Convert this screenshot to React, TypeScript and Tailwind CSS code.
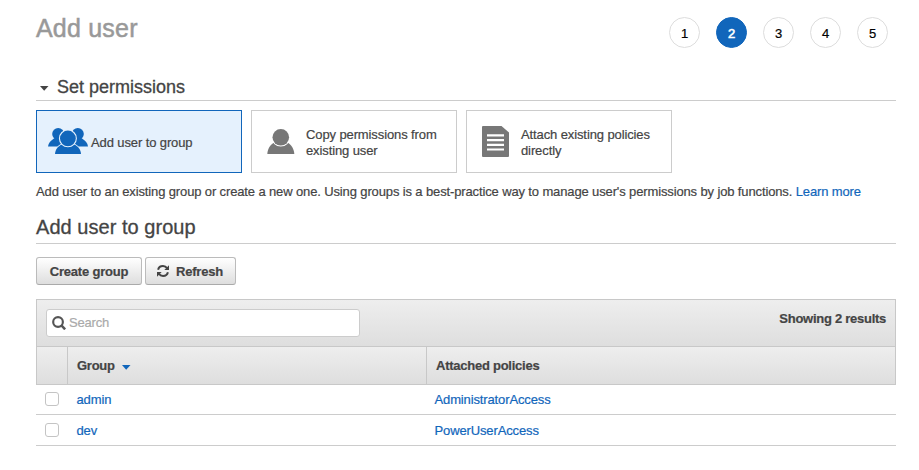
import type { ReactNode } from "react";

const UsersIcon = () => (
  <svg width="40" height="26" viewBox="0 0 40 26" fill="#1166bb" className="mb-0.5 shrink-0">
    <ellipse cx="10.200" cy="6" rx="6" ry="6" />
    <path d="M0 18.500C.5 15 2.500 12.800 6 10.500h8l3 8Z" />
    <ellipse cx="29.800" cy="6" rx="6" ry="6" />
    <path d="M40 18.500c-.5-3.500-2.500-5.700-6-8h-8l-3 8Z" />
    <path d="M7 26c.4-5 3-7.500 6.500-9.500h13c3.500 2 6.100 4.500 6.500 9.500Z" stroke="#e5f1fd" strokeWidth="1.600" paintOrder="stroke" />
    <ellipse cx="19.900" cy="10.400" rx="7.900" ry="7.800" stroke="#e5f1fd" strokeWidth="2.200" paintOrder="stroke" />
  </svg>
);

const UserIcon = () => (
  <svg width="28" height="26" viewBox="0 0 28 26" fill="#777" className="mb-0.5 shrink-0">
    <path d="M.3 26c.4-5.300 2.500-8.300 6-11h15c3.500 2.700 5.600 5.700 6 11Z" />
    <ellipse cx="13.800" cy="9.300" rx="8.300" ry="8.300" stroke="#fff" strokeWidth="2" paintOrder="stroke" />
  </svg>
);

const DocumentIcon = () => (
  <svg width="27" height="31" viewBox="0 0 27 31" className="shrink-0">
    <path d="M1 0H19.500l7.500 6.500v23.500a1 1 0 0 1-1 1h-25A1 1 0 0 1 0 30V1A1 1 0 0 1 1 0Z" fill="#777" />
    <path d="M5 9.300h17M5 14.100h17M5 18.800h17M5 23.500h17" stroke="#fff" strokeWidth="2.200" />
  </svg>
);

const RefreshIcon = () => (
  <svg width="12" height="12" viewBox="0 0 12 12" fill="none" stroke="#444" strokeWidth="2" className="-mt-0.5 shrink-0">
    <path d="M1.100 4.800C1.600 2.500 3.500 1.100 6 1.100c1.800 0 3.200.8 4.100 2.100M10.900 7.200c-.5 2.300-2.400 3.700-4.900 3.700-1.800 0-3.200-.8-4.100-2.100" />
    <path d="M12 .2v4.800H7.300ZM0 11.800V7h4.700Z" fill="#444" stroke="none" />
  </svg>
);

const SearchIcon = () => (
  <svg width="14" height="14" viewBox="0 0 13 13" fill="none" stroke="#555" className="-mt-px shrink-0">
    <circle cx="5.600" cy="5.600" r="4.500" strokeWidth="2" />
    <path d="m8.700 8.700 3.500 3.700" strokeWidth="2.300" />
  </svg>
);

const steps = [1, 2, 3, 4, 5];
const groups = [
  { name: "admin", policy: "AdministratorAccess", height: "h-[30px]", box: "-mt-0.5", text: "pt-px" },
  { name: "dev", policy: "PowerUserAccess", height: "h-[31px]", box: "mt-0", text: "pt-0.5" },
];

function Card({ active, pad, children }: { active?: boolean; pad: string; children: ReactNode }) {
  return (
    <div className={`flex h-[63px] w-[206px] items-center border tracking-[-0.11px] ${pad} ${active ? "border-[#1166bb] bg-[#e5f1fd]" : "border-[#ccc] bg-white"}`}>
      {children}
    </div>
  );
}

const button =
  "flex h-7 items-center rounded-[3px] border border-[#bbb] border-b-[#aaa] bg-linear-to-b from-white to-[#dedede] pt-0.5 text-[13px] font-bold tracking-[-0.2px]";

export default function App() {
  return (
    <main className="h-[470px] w-[919px] overflow-hidden bg-white pl-9 font-['Liberation_Sans',Arial,sans-serif] text-[13px] leading-4 text-[#444] [-webkit-text-stroke:0.2px]">
      <div className="w-[860px]">
        <header className="flex h-[73px] items-start justify-between pr-2">
          <h1 className="pt-[12px] text-[25px] leading-[32px] tracking-[0.2px] text-[#999] [-webkit-text-stroke:0.5px]">Add user</h1>
          <ol className="flex gap-4 pt-[17px]">
            {steps.map((n) => (
              <li key={n} className={`flex size-[31px] items-center justify-center rounded-full border pt-0.5 ${n === 2 ? "border-[#1166bb] bg-[#1166bb] text-white [-webkit-text-stroke:0.6px]" : "border-[#ddd] text-black"}`}>
                {n}
              </li>
            ))}
          </ol>
        </header>

        <h2 className="flex h-7 items-center border-b border-[#ccc] pl-1 text-lg [-webkit-text-stroke:0.3px]">
          <svg width="9" height="5" viewBox="0 0 9 5" className="mt-[3px] mr-2"><path d="M0 0h8.500L4.200 4.800Z" fill="#444" /></svg>
          Set permissions
        </h2>

        <section className="mt-[9px] flex gap-[9px]">
          <Card active pad="gap-[3px] pl-[11px]">
            <UsersIcon />
            <span className="pt-0.5">Add user to group</span>
          </Card>
          <Card pad="gap-[11px] pl-[15px]">
            <UserIcon />
            <span className="pt-0.5">Copy permissions from<br />existing user</span>
          </Card>
          <Card pad="gap-3 pl-[15px]">
            <DocumentIcon />
            <span className="pt-0.5">Attach existing policies<br />directly</span>
          </Card>
        </section>

        <p className="mt-[11px] whitespace-nowrap tracking-[-0.13px]">
          Add user to an existing group or create a new one. Using groups is a best-practice way to manage user's permissions by job functions. <a className="text-[#1166bb]">Learn more</a>
        </p>

        <h2 className="mt-[11px] flex h-[33px] items-center border-b border-[#ccc] text-xl tracking-[0.04px] [-webkit-text-stroke:0.3px]">Add user to group</h2>

        <div className="mt-[13px] flex gap-[3px]">
          <button className={`${button} w-[106px] justify-center`}>Create group</button>
          <button className={`${button} w-[91px] gap-[7px] pl-[11px]`}><RefreshIcon />Refresh</button>
        </div>

        <section className="mt-[14px]">
          <div className="flex h-12 items-start justify-between border border-[#c8c8c8] bg-linear-to-b from-[#eee] to-[#dedede] pt-[9px] pr-[9px] pl-[9px]">
            <div className="flex h-7 w-[314px] items-center gap-[3px] rounded-[3px] border border-[#ccc] bg-white pl-[5px] tracking-[-0.2px] text-[#aaa]"><SearchIcon />Search</div>
            <span className="pt-0.5 font-bold tracking-[-0.27px]">Showing 2 results</span>
          </div>
          <div className="flex h-[38px] border border-t-0 border-[#c8c8c8] bg-linear-to-b from-[#eee] to-[#dedede] font-bold tracking-[-0.25px]">
            <div className="w-[31px] border-r border-[#c8c8c8]" />
            <div className="flex w-[359px] items-center border-r border-[#c8c8c8] pl-[9px]">
              Group
              <svg width="9" height="5" viewBox="0 0 9 5" className="mt-[3px] ml-[7px]"><path d="M0 0h8.500L4.200 4.800Z" fill="#1166bb" /></svg>
            </div>
            <div className="flex items-center pl-[9px]">Attached policies</div>
          </div>
          {groups.map((g) => (
            <div key={g.name} className={`flex items-center border-b border-[#ccc] tracking-[-0.13px] text-[#1166bb] ${g.height}`}>
              <div className="w-[40.500px] pl-[9px]"><div className={`size-[14px] rounded-[3px] border border-[#c4c4c4] bg-white ${g.box}`} /></div>
              <a className={`w-[358px] ${g.text}`}>{g.name}</a>
              <a className={g.text}>{g.policy}</a>
            </div>
          ))}
        </section>
      </div>
    </main>
  );
}
